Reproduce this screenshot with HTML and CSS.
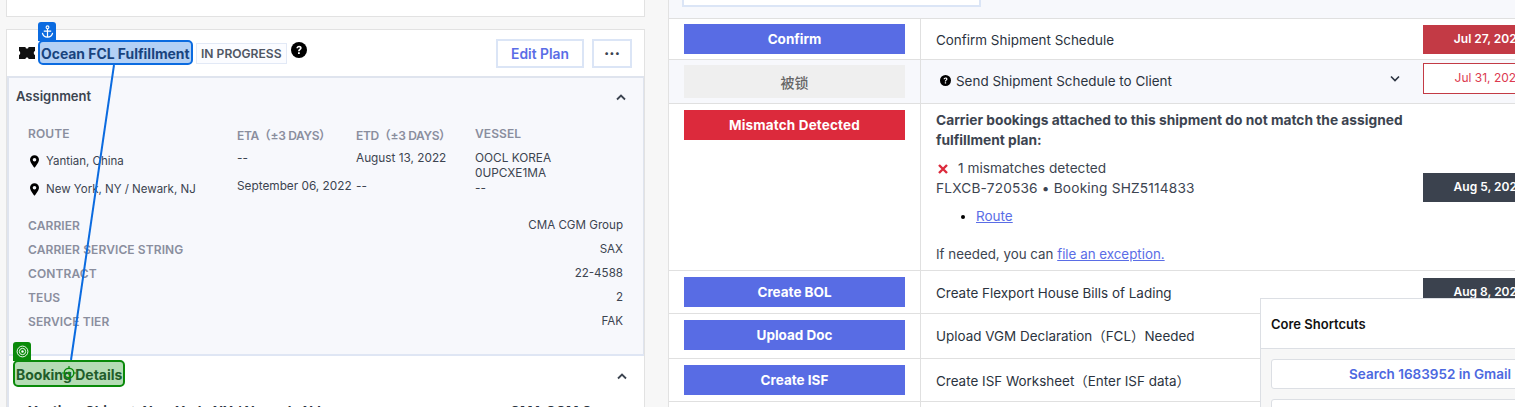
FILE: index.html
```html
<!DOCTYPE html>
<html lang="en">
<head>
<meta charset="utf-8">
<title>Shipment</title>
<link rel="stylesheet" href="styles.css">
</head>
<body>
<div class="page">
  <main class="left">
    <div class="top-card"></div>
    <section class="card">
      <header class="card-head">
        <svg class="logo" viewBox="0 0 16 12" width="16" height="12"><path d="M0 0h6.500c0 1 .5 1.500 1.500 1.500S9.500 1 9.500 0H16v4c-.8.300-1.200 1-1.200 2s.4 1.700 1.200 2v4H9.500c0-1-.5-1.500-1.500-1.500S6.500 11 6.500 12H0V8c.8-.3 1.200-1 1.200-2S.8 4.300 0 4z" fill="#111"/></svg>
        <h2 class="plan-title">Ocean FCL Fulfillment</h2>
        <span class="status">IN PROGRESS</span>
        <svg class="help" viewBox="0 0 16 16" width="16" height="16"><circle cx="8" cy="8" r="8" fill="#000"/><path d="M5.400 6.200c0-1.600 1.200-2.500 2.700-2.500s2.600.9 2.600 2.200c0 1.900-2 1.900-2 3.300H7c0-2.100 1.900-2.200 1.900-3.200 0-.5-.4-.8-.9-.8-.6 0-.9.400-1 1z M7 10.300h1.800V12H7z" fill="#fff"/></svg>
        <div class="head-actions">
          <button class="btn-edit">Edit Plan</button>
          <button class="btn-more">···</button>
        </div>
      </header>
      <section class="assignment">
        <div class="section-title">
          <h3>Assignment</h3>
          <svg class="chev" viewBox="0 0 10 7" width="10" height="7"><path d="M1 5.500l4-4 4 4" fill="none" stroke="#3c4450" stroke-width="1.800"/></svg>
        </div>
        <div class="route-grid">
          <div class="label">ROUTE</div>
          <div class="label eta">ETA（±3 DAYS）</div>
          <div class="label eta">ETD（±3 DAYS）</div>
          <div class="label">VESSEL</div>
          <div class="route-stops">
            <div class="stop"><svg viewBox="0 0 10 14" width="10" height="14"><path d="M5 0a5 5 0 0 0-5 5c0 3 5 9 5 9s5-6 5-9a5 5 0 0 0-5-5zm0 3a2 2 0 1 1 0 4 2 2 0 0 1 0-4z" fill="#000"/></svg>Yantian, China</div>
            <div class="stop"><svg viewBox="0 0 10 14" width="10" height="14"><path d="M5 0a5 5 0 0 0-5 5c0 3 5 9 5 9s5-6 5-9a5 5 0 0 0-5-5zm0 3a2 2 0 1 1 0 4 2 2 0 0 1 0-4z" fill="#000"/></svg>New York, NY / Newark, NJ</div>
          </div>
          <div class="dates"><div class="d1">--</div><div class="d2">September 06, 2022</div></div>
          <div class="dates"><div class="d1">August 13, 2022</div><div class="d2">--</div></div>
          <div class="vessel"><div>OOCL KOREA</div><div>0UPCXE1MA</div><div>--</div></div>
        </div>
        <dl class="facts">
          <div class="fact"><dt>CARRIER</dt><dd>CMA CGM Group</dd></div>
          <div class="fact"><dt>CARRIER SERVICE STRING</dt><dd>SAX</dd></div>
          <div class="fact"><dt>CONTRACT</dt><dd>22-4588</dd></div>
          <div class="fact"><dt>TEUS</dt><dd>2</dd></div>
          <div class="fact"><dt>SERVICE TIER</dt><dd>FAK</dd></div>
        </dl>
      </section>
      <section class="booking">
        <div class="section-title booking-title">
          <h3>Booking Details</h3>
          <svg class="chev" viewBox="0 0 10 7" width="10" height="7"><path d="M1 5.500l4-4 4 4" fill="none" stroke="#3c4450" stroke-width="1.800"/></svg>
        </div>
        <div class="booking-row"><span>Yantian, China → New York, NY / Newark, NJ</span><span>CMA CGM Group</span></div>
      </section>
    </section>
  </main>

  <aside class="right">
    <div class="search-band"><div class="search-box"></div></div>
    <div class="row r1">
      <div class="act"><button class="action">Confirm</button></div>
      <div class="desc">Confirm Shipment Schedule</div>
      <div class="due"><span class="date date-red">Jul 27, 2022</span></div>
    </div>
    <div class="row r2 tint">
      <div class="act"><button class="action locked">被锁</button></div>
      <div class="desc desc-q">
        <svg class="q" viewBox="0 0 16 16" width="11" height="11"><circle cx="8" cy="8" r="8" fill="#000"/><path d="M5.200 6.200c0-1.700 1.300-2.700 2.900-2.700s2.800 1 2.800 2.400c0 2-2.100 2-2.100 3.500H7c0-2.300 2-2.400 2-3.400 0-.5-.4-.9-1-.9s-1 .4-1 1z M7 10.500h1.900v1.900H7z" fill="#fff"/></svg>
        <span>Send Shipment Schedule to Client</span>
        <svg class="down" viewBox="0 0 10 7" width="10" height="7"><path d="M1 1.500l4 4 4-4" fill="none" stroke="#2b3340" stroke-width="1.600"/></svg>
      </div>
      <div class="due"><span class="date date-outline">Jul 31, 2022</span></div>
    </div>
    <div class="row r3">
      <div class="act"><button class="action danger">Mismatch Detected</button></div>
      <div class="desc desc-long">
        <p class="strong">Carrier bookings attached to this shipment do not match the assigned fulfillment plan:</p>
        <p class="mm"><svg class="x" viewBox="0 0 10 10" width="10" height="10"><path d="M1 1l8 8M9 1l-8 8" stroke="#dc2a3c" stroke-width="2.400" fill="none"/></svg>1 mismatches detected</p>
        <p class="bk">FLXCB-720536 • Booking SHZ5114833</p>
        <ul><li><a href="#">Route</a></li></ul>
        <p class="need">If needed, you can <a href="#">file an exception.</a></p>
      </div>
      <div class="due due-mid"><span class="date date-dark">Aug 5, 2022</span></div>
    </div>
    <div class="row r4">
      <div class="act"><button class="action">Create BOL</button></div>
      <div class="desc">Create Flexport House Bills of Lading</div>
      <div class="due due-low"><span class="date date-dark">Aug 8, 2022</span></div>
    </div>
    <div class="row r5">
      <div class="act"><button class="action">Upload Doc</button></div>
      <div class="desc">Upload VGM Declaration（FCL）Needed</div>
      <div class="due"></div>
    </div>
    <div class="row r6">
      <div class="act"><button class="action">Create ISF</button></div>
      <div class="desc">Create ISF Worksheet（Enter ISF data）</div>
      <div class="due"></div>
    </div>
    <div class="row r7"><div class="act"></div><div class="desc"></div><div class="due"></div></div>
  </aside>
</div>

<div class="shortcuts">
  <div class="sc-head">Core Shortcuts</div>
  <div class="sc-body">
    <button class="sc-btn">Search 1683952 in Gmail</button>
    <button class="sc-btn"></button>
  </div>
</div>

<svg class="connector" width="1515" height="407" viewBox="0 0 1515 407"><line x1="114" y1="65" x2="71" y2="360" stroke="#0b6be0" stroke-width="2"/></svg>
<div class="anno anno-blue"></div>
<div class="anno-tab tab-blue"><svg viewBox="0 0 14 14" width="13" height="13"><path d="M7 4v9M3 6.500h8M1.500 8.500c.5 3 3 4.500 5.500 4.500s5-1.500 5.500-4.500" fill="none" stroke="#fff" stroke-width="1.300"/><circle cx="7" cy="2.500" r="1.500" fill="none" stroke="#fff" stroke-width="1.200"/></svg></div>
<div class="anno anno-green"></div>
<div class="anno-tab tab-green"><svg viewBox="0 0 14 14" width="13" height="13"><circle cx="7" cy="7" r="5.800" fill="none" stroke="#fff" stroke-width="1"/><circle cx="7" cy="7" r="3.400" fill="none" stroke="#fff" stroke-width="1"/><circle cx="7" cy="7" r="1.300" fill="#fff"/></svg></div>
<svg class="target" viewBox="0 0 14 14" width="14" height="14"><circle cx="7" cy="7" r="4.800" fill="none" stroke="#0a8a0a" stroke-width="1.400"/><circle cx="7" cy="7" r="1.500" fill="#0a8a0a"/><path d="M7 0v2M7 12v2M0 7h2M12 7h2" stroke="#0a8a0a" stroke-width="1.200"/></svg>
</body>
</html>
```
FILE: styles.css
```css
* { box-sizing: border-box; }
html, body { margin: 0; padding: 0; height: 407px; overflow: hidden; }
body {
  position: relative;
  background: #f7f7f7;
  font-family: "Inter", "Noto Sans CJK SC", sans-serif;
  font-size: 13px;
  color: #2b3340;
}
h2, h3, p, dl, dd, ul { margin: 0; padding: 0; }
button { font-family: inherit; }
.page { display: flex; align-items: flex-start; height: 407px; overflow: hidden; }

.left { width: 639px; margin-left: 6px; flex: none; }
.top-card { height: 17px; background: #fff; border: 1px solid #e2e2e2; border-top: 0; }
.card { margin-top: 12px; background: #fff; border: 1px solid #e2e2e2; border-bottom: 0; height: 378px; overflow: hidden; }

.card-head { height: 46px; display: flex; align-items: center; padding-left: 12px; padding-right: 12px; }
.logo { flex: none; margin-right: 6px; }
.plan-title { font-size: 13.900px; font-weight: 700; color: #1c3050; white-space: nowrap; width: 154px; margin-top: 1px; }
.status { margin-left: 1px; height: 21px; line-height: 19px; padding: 0 4px; border: 1px solid #e2e9f6; font-size: 12.100px; font-weight: 600; color: #4f5663; white-space: nowrap; background: #fbfcff; }
.help { margin-left: 4px; margin-top: -7px; }
.head-actions { margin-left: auto; display: flex; gap: 8px; margin-top: 1px; }
.btn-edit, .btn-more { height: 29px; background: #fff; border: 2px solid #dbe5f6; padding: 0; }
.btn-edit { width: 88px; color: #5a6de6; font-size: 13.800px; font-weight: 600; }
.btn-more { width: 40px; color: #3c4450; font-size: 15px; font-weight: 800; }

.assignment { height: 278px; background: #f7f8fc; border-top: 2px solid #dfe4ee; border-left: 2px solid #dfe4ee; border-right: 1px solid #dfe4ee; padding: 0 0 0 7px; }
.section-title { display: flex; align-items: center; justify-content: space-between; height: 37px; padding-right: 17px; }
.section-title h3 { font-size: 13px; font-weight: 600; color: #3c4450; margin-bottom: 2px; }
.chev { flex: none; margin-top: 2px; }

.route-grid { margin: 11px 0 0 12px; display: grid; grid-template-columns: 209px 119px 119px 1fr; grid-template-rows: 20px 67px; }
.label { font-size: 12px; font-weight: 600; color: #8a8e9e; letter-spacing: .1px; white-space: nowrap; }
.eta { letter-spacing: -.35px; }
.route-stops { padding-top: 1px; }
.stop { display: flex; align-items: center; gap: 7px; font-size: 11.500px; height: 28px; color: #3c4450; padding-left: 2px; white-space: nowrap; }
.stop svg { flex: none; width: 9px; height: 13px; }
.dates { font-size: 11.800px; color: #3c4450; padding-top: 5px; white-space: nowrap; }
.d1 { height: 28px; }
.d2 { height: 18px; }
.vessel { font-size: 11.800px; color: #3c4450; padding-top: 5px; line-height: 15px; }

.facts { padding: 0 20px 0 12px; }
.fact { display: flex; justify-content: space-between; align-items: center; height: 24px; }
.fact dt { font-size: 12px; font-weight: 600; color: #8a8e9e; letter-spacing: .1px; }
.fact dd { font-size: 11.600px; color: #3c4450; }

.booking { border-top: 2px solid #dfe6f4; border-left: 2px solid #dfe4ee; padding-left: 7px; }
.booking-title { height: 38px; }
.booking-title h3 { font-weight: 700; font-size: 14px; color: #2d4a3a; }
.booking-row { display: grid; grid-template-columns: 482px 1fr; padding-left: 12px; margin-top: 8px; line-height: 18px; font-weight: 700; color: #2b3340; font-size: 13.500px; white-space: nowrap; }

.right { position: absolute; left: 668px; top: 0; width: 847px; border-left: 1px solid #e2e2e2; background: #fff; overflow: hidden; }
.search-band { height: 19px; background: #f7f8fc; border-bottom: 1px solid #e0e0e0; padding-left: 13px; }
.search-box { width: 299px; height: 7px; background: #fff; border: 2px solid #dbe5f6; border-top: 0; }
.row { display: grid; grid-template-columns: 252px 502px 1fr; border-bottom: 1px solid #e0e0e0; background: #fff; }
.tint { background: #f7f8fc; }
.r1 { height: 41px; }
.r2 { height: 44px; }
.r3 { height: 167px; }
.r4 { height: 43px; }
.r5 { height: 45px; }
.r6 { height: 43px; }
.r7 { height: 30px; }
.act { border-right: 1px solid #e0e0e0; padding: 5px 15px 0; }
.r3 .act, .r4 .act, .r5 .act, .r6 .act { padding-top: 6px; }
.action { display: block; width: 221px; height: 30px; border: 0; background: #586ce4; color: #fff; font-size: 13.500px; font-weight: 700; padding: 0; }
.danger { background: #dc2a3c; letter-spacing: .15px; }
.locked { height: 33px; background: #efefef; color: #666; font-weight: 500; font-size: 14px; }
.desc { padding: 0 15px; font-size: 13.450px; color: #2b3340; display: flex; align-items: center; white-space: nowrap; }
.r1 .desc, .r4 .desc { padding-top: 2px; }
.r2 .desc, .r5 .desc { padding-bottom: 2px; }
.desc-q { gap: 5px; padding-left: 19px; }
.q { margin-top: -1px; flex: none; }
.down { margin-left: auto; margin-right: 8px; margin-top: -4px; flex: none; }
.desc-long { display: block; padding-top: 6px; color: #3c4450; line-height: 19px; font-size: 13.700px; white-space: normal; }
.strong { font-weight: 700; line-height: 20px; margin-bottom: 8px; color: #3c4450; font-size: 13.750px; }
.x { margin: 0 10px 0 2px; vertical-align: -1px; }
.mm { line-height: 20px; }
.bk { line-height: 20px; margin-bottom: 9px; letter-spacing: .18px; }
.desc-long ul { margin-left: 40px; margin-bottom: 19px; color: #000; font-size: 13.500px; }
.need { font-size: 13.350px; }
a { color: #5a6de6; }
.due { padding-top: 6px; overflow: hidden; }
.date { display: block; width: 132px; height: 29px; line-height: 28px; text-align: center; font-size: 12px; font-weight: 600; color: #fff; }
.date-red { background: #c33a45; }
.date-dark { background: #3b424e; }
.date-outline { background: #fff; border: 1px solid #c33a45; color: #dc3a50; font-weight: 400; height: 31px; line-height: 27px; margin-top: -3px; }
.due-mid { padding-top: 69px; }
.due-low { padding-top: 7px; }

.shortcuts { position: absolute; left: 1260px; top: 298px; width: 260px; height: 120px; background: #f7f7f7; border: 1px solid #dcdfe4; }
.sc-head { height: 50px; background: #fff; border-bottom: 1px solid #dcdfe4; padding-left: 10px; line-height: 50px; font-size: 13px; font-weight: 600; color: #111; }
.sc-body { padding: 10px; display: flex; flex-direction: column; gap: 10px; }
.sc-btn { flex: none; width: 260px; height: 30px; background: #fff; border: 1px solid #dcdfe4; border-radius: 3px; color: #4c68e0; font-size: 13.500px; font-weight: 600; white-space: nowrap; text-align: left; padding: 0 0 0 77px; }

.connector { position: absolute; left: 0; top: 0; pointer-events: none; }
.anno { position: absolute; border-radius: 5px; border-style: solid; border-width: 2px; }
.anno-blue { left: 38px; top: 40px; width: 155px; height: 25px; background: rgba(20, 110, 225, .32); border-color: #0b6be0; }
.anno-green { left: 13px; top: 360px; width: 112px; height: 27px; background: rgba(10, 140, 10, .3); border-color: #0a8a0a; }
.anno-tab { position: absolute; width: 18px; height: 19px; display: flex; align-items: center; justify-content: center; border-radius: 3px 3px 0 0; }
.tab-blue { left: 38px; top: 22px; background: #0b6be0; }
.tab-green { left: 13px; top: 342px; background: #0a8a0a; }
.target { position: absolute; left: 62px; top: 366px; }
```
